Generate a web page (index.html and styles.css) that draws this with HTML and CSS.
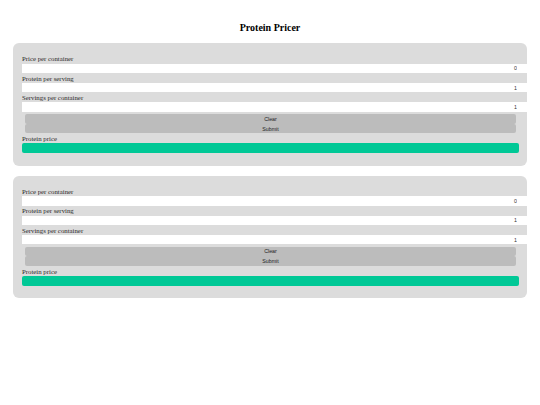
FILE: index.html
```html
<!DOCTYPE html>
<html lang="en">

<head>
    <meta charset="UTF-8">
    <meta name="viewport" content="width=device-width, initial-scale=1.0">
    <title>Protein Pricer</title>
    <link rel="stylesheet" href="styles.css">
</head>

<body>
    <h1>Protein Pricer</h1>

    <div class="calculator">
        <label>Price per container</label>
        <input type="text" class="field" value="0">
        <label>Protein per serving</label>
        <input type="text" class="field" value="1">
        <label>Servings per container</label>
        <input type="text" class="field" value="1">
        <button class="btn">Clear</button>
        <button class="btn">Submit</button>
        <label>Protein price</label>
        <div class="result"></div>
    </div>

    <div class="calculator">
        <label>Price per container</label>
        <input type="text" class="field" value="0">
        <label>Protein per serving</label>
        <input type="text" class="field" value="1">
        <label>Servings per container</label>
        <input type="text" class="field" value="1">
        <button class="btn">Clear</button>
        <button class="btn">Submit</button>
        <label>Protein price</label>
        <div class="result"></div>
    </div>
</body>

</html>
```
FILE: styles.css
```css
* {
    margin: 0;
    padding: 0;
    box-sizing: border-box;
}

body {
    padding-top: 20.5px;
    font-family: "Liberation Serif", "Times New Roman", serif;
    background-color: #fff;
}

h1 {
    text-align: center;
    font-size: 10px;
    line-height: 14px;
    margin-bottom: 8.5px;
}

.calculator {
    width: 514px;
    margin: 0 auto 10px;
    padding: 10.8px 0 12.7px 9px;
    display: flex;
    flex-direction: column;
    background-color: #dcdcdc;
    border-radius: 6px;
}

.calculator label {
    display: block;
    font-size: 6.8px;
    line-height: 10px;
    height: 10px;
    padding-top: 0.5px;
    color: #2a2a2a;
}

.field {
    width: 100%;
    height: 9.3px;
    border: none;
    outline: none;
    padding: 0 10px 0 0;
    text-align: right;
    font-family: "Liberation Sans", Arial, sans-serif;
    font-size: 5.3px;
    color: #333;
    background-color: #fff;
}

.btn {
    height: 9.7px;
    margin: 0 11px 0 3px;
    border: none;
    border-radius: 2px;
    font-family: "Liberation Sans", Arial, sans-serif;
    font-size: 5.3px;
    color: #222;
    background-color: #bcbcbc;
}

.btn:first-of-type {
    margin-top: 2.3px;
}

.result {
    height: 9.6px;
    margin-right: 8px;
    border-radius: 2px;
    background-color: #00c896;
}
```
